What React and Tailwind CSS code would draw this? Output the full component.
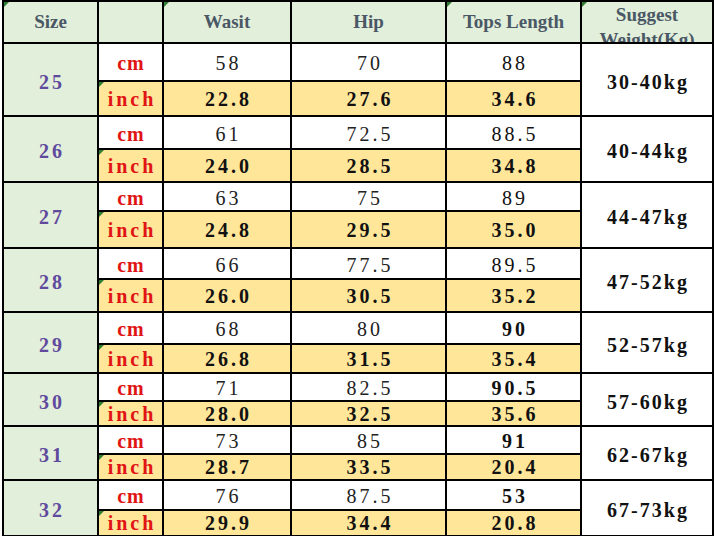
import React from "react";

const rows = [
  { size: 25, cm: ["58", "70", "88"], inch: ["22.8", "27.6", "34.6"], weight: "30-40kg", topsBold: false },
  { size: 26, cm: ["61", "72.5", "88.5"], inch: ["24.0", "28.5", "34.8"], weight: "40-44kg", topsBold: false },
  { size: 27, cm: ["63", "75", "89"], inch: ["24.8", "29.5", "35.0"], weight: "44-47kg", topsBold: false },
  { size: 28, cm: ["66", "77.5", "89.5"], inch: ["26.0", "30.5", "35.2"], weight: "47-52kg", topsBold: false },
  { size: 29, cm: ["68", "80", "90"], inch: ["26.8", "31.5", "35.4"], weight: "52-57kg", topsBold: true },
  { size: 30, cm: ["71", "82.5", "90.5"], inch: ["28.0", "32.5", "35.6"], weight: "57-60kg", topsBold: true },
  { size: 31, cm: ["73", "85", "91"], inch: ["28.7", "33.5", "20.4"], weight: "62-67kg", topsBold: true },
  { size: 32, cm: ["76", "87.5", "53"], inch: ["29.9", "34.4", "20.8"], weight: "67-73kg", topsBold: true },
];

// little green marker excel draws in the corner
const Flag = () => (
  <span className="absolute left-0 top-0 h-0 w-0 border-t-[5px] border-r-[5px] border-t-[#2f7d32] border-r-transparent" />
);

const Head = ({ children, flag }) => (
  <div className="relative flex items-center justify-center bg-[#e2efda] font-['Liberation_Serif',serif] text-[19px] font-bold text-[#4a5866]">
    {flag && <Flag />}
    {children}
  </div>
);

const serif = "font-['Liberation_Serif',serif] text-[20px]";
const num = `${serif} tracking-[3px] pl-[3px]`;

export default function App() {
  return (
    <div className="min-h-[536px] bg-white">
      <div className="ml-[2px] grid w-fit grid-cols-[93px_63px_126px_153px_133px_130px] grid-rows-[40px_36px_33px_31px_31px_27px_35px_29px_31px_30px_27px_26px_23px_26px_24px_28px_24px] gap-[2px] bg-black p-[2px]">
        <Head flag>Size</Head>
        <Head />
        <Head flag>Wasit</Head>
        <Head>Hip</Head>
        <Head flag>Tops Length</Head>
        <div className="relative flex flex-col items-center overflow-hidden bg-[#e2efda] font-['Liberation_Serif',serif] text-[19px] font-bold leading-[25px] text-[#4a5866]">
          <Flag />
          <span>Suggest</span>
          <span>Weight(Kg)</span>
        </div>

        {rows.map((r) => (
          <React.Fragment key={r.size}>
            <div className={`row-span-2 flex items-center justify-center bg-[#e2efda] pt-[4px] font-semibold text-[#5f4a9e] ${num}`}>
              {r.size}
            </div>
            <div className={`flex items-center justify-center bg-white pt-[2px] font-bold text-[#e01414] ${serif} tracking-[1px] pl-[1px]`}>cm</div>
            <div className={`flex items-center justify-center bg-white pt-[2px] text-[#222] ${num}`}>{r.cm[0]}</div>
            <div className={`flex items-center justify-center bg-white pt-[2px] text-[#222] ${num}`}>{r.cm[1]}</div>
            <div className={`flex items-center justify-center bg-white pt-[2px] text-[#111] ${num} ${r.topsBold ? "font-bold" : ""}`}>
              {r.cm[2]}
            </div>
            <div className={`row-span-2 flex items-center justify-center bg-white pt-[4px] font-bold text-[#111] ${serif} tracking-[2px] pl-[2px]`}>
              {r.weight}
            </div>
            <div className={`relative flex items-center justify-center bg-[#ffe699] font-bold text-[#e01414] ${serif} tracking-[3px] pl-[3px]`}>
              <Flag />
              inch
            </div>
            <div className={`flex items-center justify-center bg-[#ffe699] font-bold text-[#111] ${num}`}>{r.inch[0]}</div>
            <div className={`flex items-center justify-center bg-[#ffe699] font-bold text-[#111] ${num}`}>{r.inch[1]}</div>
            <div className={`flex items-center justify-center bg-[#ffe699] font-bold text-[#111] ${num}`}>{r.inch[2]}</div>
          </React.Fragment>
        ))}
      </div>
    </div>
  );
}
